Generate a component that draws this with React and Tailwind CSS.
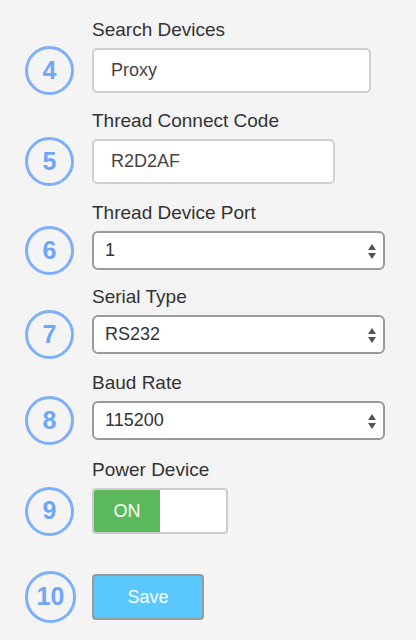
import React from "react";

const Step = ({ n, size = "w-[49px] h-[49px]" }) => (
  <div
    className={`${size} ml-[25px] mr-[18px] shrink-0 rounded-full border-[3px] border-[#7daffb] flex items-center justify-center text-[25px] font-bold text-[#6ea6f7]`}
  >
    {n}
  </div>
);

const Label = ({ children }) => (
  <div className="pl-[92px] text-[19px] leading-[24px] text-[#333] mb-[6px]">
    {children}
  </div>
);

const SelectBox = ({ value }) => (
  <div className="w-[293px] h-[39px] rounded-[6px] border-2 border-[#9a9a9a] bg-white flex items-center justify-between pl-[11px] pr-[6px] text-[18px] text-[#333]">
    <span>{value}</span>
    <svg width="10" height="20" viewBox="0 0 10 20">
      <path d="M5 3 L9 9 L1 9 Z" fill="#555" />
      <path d="M1 12 L9 12 L5 18 Z" fill="#555" />
    </svg>
  </div>
);

const TextBox = ({ value, width }) => (
  <div
    className={`${width} h-[45px] rounded-[5px] border-2 border-[#d0d0d0] bg-white flex items-center pl-[17px] text-[18px] text-[#444]`}
  >
    {value}
  </div>
);

export default function App() {
  return (
    <div
      className="w-[416px] h-[640px] bg-[#f4f4f4] pt-[18px]"
      style={{ fontFamily: '"Liberation Sans", Arial, sans-serif' }}
    >
      {/* Search Devices */}
      <Label>Search Devices</Label>
      <div className="flex items-center h-[45px]">
        <Step n="4" />
        <TextBox value="Proxy" width="w-[279px]" />
      </div>

      {/* Thread Connect Code */}
      <div className="mt-[16px]">
        <Label>Thread Connect Code</Label>
        <div className="flex items-center h-[45px]">
          <Step n="5" />
          <TextBox value="R2D2AF" width="w-[243px]" />
        </div>
      </div>

      {/* Thread Device Port */}
      <div className="mt-[17px]">
        <Label>Thread Device Port</Label>
        <div className="flex items-center h-[39px]">
          <Step n="6" />
          <SelectBox value="1" />
        </div>
      </div>

      {/* Serial Type */}
      <div className="mt-[15px]">
        <Label>Serial Type</Label>
        <div className="flex items-center h-[39px]">
          <Step n="7" />
          <SelectBox value="RS232" />
        </div>
      </div>

      {/* Baud Rate */}
      <div className="mt-[17px]">
        <Label>Baud Rate</Label>
        <div className="flex items-center h-[39px]">
          <Step n="8" />
          <SelectBox value="115200" />
        </div>
      </div>

      {/* Power Device */}
      <div className="mt-[18px]">
        <Label>Power Device</Label>
        <div className="flex items-center h-[46px]">
          <Step n="9" />
          <div className="w-[136px] h-[46px] rounded-[4px] border-2 border-[#cccccc] bg-white flex overflow-hidden">
            <div className="w-[66px] h-full bg-[#5cb85c] flex items-center justify-center text-[18px] text-white">
              ON
            </div>
          </div>
        </div>
      </div>

      {/* Save */}
      <div className="mt-[40px] flex items-center h-[46px]">
        <Step n="10" size="w-[51px] h-[52px]" />
        <button className="w-[112px] h-[46px] rounded-[4px] border-2 border-[#999] bg-[#5ac8fd] text-[18px] text-white ml-[-2px]">
          Save
        </button>
      </div>
    </div>
  );
}
